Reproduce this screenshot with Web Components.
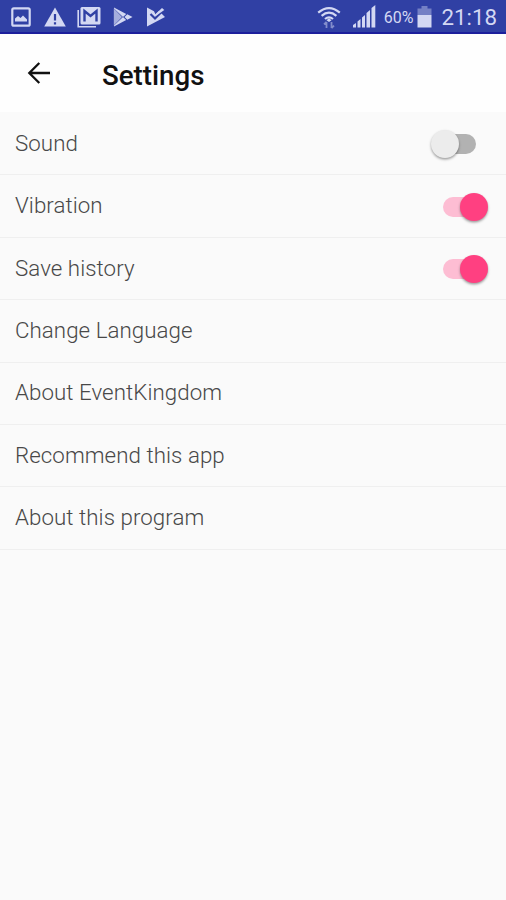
<!DOCTYPE html>
<html lang="en">
<head>
<meta charset="utf-8">
<title>Settings</title>
<style>
	html, body {
		margin: 0;
		height: 100%;
		background: #fafafa;
		font-family: Roboto, sans-serif;
	}
</style>
</head>
<body>
<settings-screen></settings-screen>
<script>
const ICONS = {
	image: [20, 20, `<rect x="1.3" y="1.3" width="17.4" height="17.4" rx="1.5" fill="none" stroke="currentColor" stroke-width="2.2"/><path d="M4 14.5V11.5L7 9L9.5 11L12 8.5L16 12.5V14.5Z" fill="currentColor"/>`],
	warning: [22, 20, `<path d="M11 .5L21.8 19.5H.2Z" fill="currentColor"/><path d="M11 7V13.5M11 15.2V17.6" stroke="#3040a4" stroke-width="2.2"/>`],
	mail: [24, 22, `<path d="M1.2 4V20.8H19" fill="none" stroke="currentColor" stroke-width="1.6"/><rect x="3.5" y="1" width="20" height="17.5" rx="1.5" fill="currentColor"/><path d="M7.5 15.5V5L13.5 10L19.5 5V15.5" fill="none" stroke="#3040a4" stroke-width="2.4"/>`],
	play: [20, 20, `<path d="M1 .5L13.2 7L10 10L1 1.5ZM1 19.5L13.2 13L10 10L1 18.5Z" fill="currentColor"/><path d="M.8 1.5L9 10L.8 18.5Z" fill="currentColor" opacity=".72"/><path d="M14.3 7.3L19.5 10L14.3 12.7L11.5 10Z" fill="currentColor"/>`],
	check: [20, 20, `<path d="M1 .5L8 4.3L9.5 7.5L13 4L19 10L1 19.5Z" fill="currentColor"/><path d="M4.5 7L9 11.5L17 3.5" fill="none" stroke="#3040a4" stroke-width="2.2"/><path d="M9 7.5L16 1L18.3 3L10.2 8.8Z" fill="currentColor"/>`],
	wifi: [24, 24, `<g fill="none" stroke="currentColor" stroke-width="2.2"><path d="M1.2 7.6Q12-1.5 22.8 7.6"/><path d="M4.6 10.8Q12 4.6 19.4 10.8"/><path d="M8 14Q12 10.6 16 14"/></g><path d="M9.5 15.3L12 13.2L14.5 15.3L12 17Z" fill="currentColor"/><path d="M9.5 23V17M7 19.3L9.5 16.8M14.5 17V23M17 20.7L14.5 23.2" fill="none" stroke="currentColor" stroke-width="1.8" opacity=".5"/>`],
	signal: [24, 23, `<path d="M1 22.5V20L4 18V22.5ZM5.5 22.5V16.5L8.5 14V22.5ZM10 22.5V12.5L13 10V22.5ZM14.5 22.5V8L18 5V22.5ZM19.5 22.5V3L23.3 0V22.5Z" fill="currentColor"/>`],
	battery: [15, 22, `<path d="M4.5 0H10.5V2.5H14.5V9H.5V2.5H4.5Z" fill="currentColor" opacity=".42"/><path d="M.5 9H14.5V21.5H.5Z" fill="currentColor"/>`],
	back: [24, 24, `<path d="M23 12H2.8M12.3 2L2.3 12L12.3 22" fill="none" stroke="currentColor" stroke-width="2.3"/>`]
};

class AppIcon extends HTMLElement {
	constructor(){
		super();
		this.attachShadow({mode:"open"});
	}

	connectedCallback(){
		const [width,height,shape] = ICONS[this.getAttribute("name")];
		this.shadowRoot.innerHTML = `
			<style>
				:host {
					display: block;
					flex: none;
				}
				svg {
					display: block;
				}
			</style>
			<svg width="${width}" height="${height}" viewBox="0 0 ${width} ${height}">${shape}</svg>
		`;
	}
}
window.customElements.define("app-icon",AppIcon);

class StatusBar extends HTMLElement {
	constructor(){
		super();
		this.attachShadow({mode:"open"});
		this.shadowRoot.innerHTML = `
			<style>
				:host {
					display: flex;
					align-items: center;
					justify-content: space-between;
					box-sizing: border-box;
					height: 34px;
					padding: 1px 9px 0 11px;
					background: #3040a4;
					border-bottom: 2px solid #1c1f9c;
					color: #d3d8f3;
				}
				div {
					display: flex;
					align-items: center;
				}
				.left {
					gap: 13px;
				}
				.left app-icon:nth-child(2) {
					margin-right: -2px;
				}
				.left app-icon:nth-child(3) {
					margin-right: -1px;
				}
				.signal {
					margin-left: 11px;
				}
				.percent {
					margin: 2px 4px 0 8px;
					font-size: 16px;
				}
				.time {
					margin: 0 0 0 9px;
					font-size: 22.3px;
					line-height: 28px;
				}
			</style>
			<div class="left">
				<app-icon name="image"></app-icon>
				<app-icon name="warning"></app-icon>
				<app-icon name="mail"></app-icon>
				<app-icon name="play"></app-icon>
				<app-icon name="check"></app-icon>
			</div>
			<div>
				<app-icon name="wifi"></app-icon>
				<app-icon class="signal" name="signal"></app-icon>
				<span class="percent">60%</span>
				<app-icon name="battery"></app-icon>
				<span class="time">21:18</span>
			</div>
		`;
	}
}
window.customElements.define("status-bar",StatusBar);

class AppToolbar extends HTMLElement {
	constructor(){
		super();
		this.attachShadow({mode:"open"});
		this.shadowRoot.innerHTML = `
			<style>
				:host {
					display: flex;
					align-items: center;
					gap: 51px;
					box-sizing: border-box;
					height: 78px;
					padding: 4px 27px 0;
					background: #fefefe;
					color: #111;
				}
				app-icon {
					margin-top: -4px;
				}
				h1 {
					margin: 0;
					font-size: 27.7px;
					font-weight: 500;
				}
			</style>
			<app-icon name="back"></app-icon>
			<h1><slot></slot></h1>
		`;
	}
}
window.customElements.define("app-toolbar",AppToolbar);

class ToggleSwitch extends HTMLElement {
	constructor(){
		super();
		this.attachShadow({mode:"open"});
		this.shadowRoot.innerHTML = `
			<style>
				:host {
					display: flex;
					align-items: center;
					box-sizing: border-box;
					width: 45px;
					height: 20px;
					margin-right: 30px;
					background: linear-gradient(#b2b2b2,#b2b2b2) 10px 0/35px 20px no-repeat;
					border-radius: 10px;
				}
				:host([checked]) {
					justify-content: flex-end;
					margin-right: 18px;
					background: linear-gradient(#fdbdd3,#fdbdd3) 0 0/35px 20px no-repeat;
				}
				span {
					flex: none;
					width: 28px;
					height: 28px;
					border-radius: 50%;
					background: #ececec;
					box-shadow: 0 1.5px 2.5px #00000060;
				}
				:host([checked]) span {
					background: #ff4081;
				}
			</style>
			<span></span>
		`;
	}
}
window.customElements.define("toggle-switch",ToggleSwitch);

class SettingsRow extends HTMLElement {
	constructor(){
		super();
		this.attachShadow({mode:"open"});
		this.shadowRoot.innerHTML = `
			<style>
				:host {
					display: flex;
					align-items: center;
					justify-content: space-between;
					box-sizing: border-box;
					height: 62.4px;
					padding-left: 15px;
					border-bottom: 1px solid #efefef;
					color: #484848;
					font-size: 22.3px;
					font-weight: 300;
					letter-spacing: 0.06px;
				}
				.label {
					padding-bottom: 1.6px;
				}
				::slotted(toggle-switch) {
					position: relative;
					top: 0.5px;
				}
			</style>
			<span class="label"><slot></slot></span>
			<slot name="control"></slot>
		`;
	}
}
window.customElements.define("settings-row",SettingsRow);

class SettingsScreen extends HTMLElement {
	constructor(){
		super();
		this.attachShadow({mode:"open"});
		this.shadowRoot.innerHTML = `
			<style>
				:host {
					display: block;
				}
				main {
					padding-top: 1px;
				}
			</style>
			<status-bar></status-bar>
			<app-toolbar>Settings</app-toolbar>
			<main>
				<settings-row>Sound<toggle-switch slot="control"></toggle-switch></settings-row>
				<settings-row>Vibration<toggle-switch slot="control" checked></toggle-switch></settings-row>
				<settings-row>Save history<toggle-switch slot="control" checked></toggle-switch></settings-row>
				<settings-row>Change Language</settings-row>
				<settings-row>About EventKingdom</settings-row>
				<settings-row>Recommend this app</settings-row>
				<settings-row>About this program</settings-row>
			</main>
		`;
	}
}
window.customElements.define("settings-screen",SettingsScreen);
</script>
</body>
</html>
